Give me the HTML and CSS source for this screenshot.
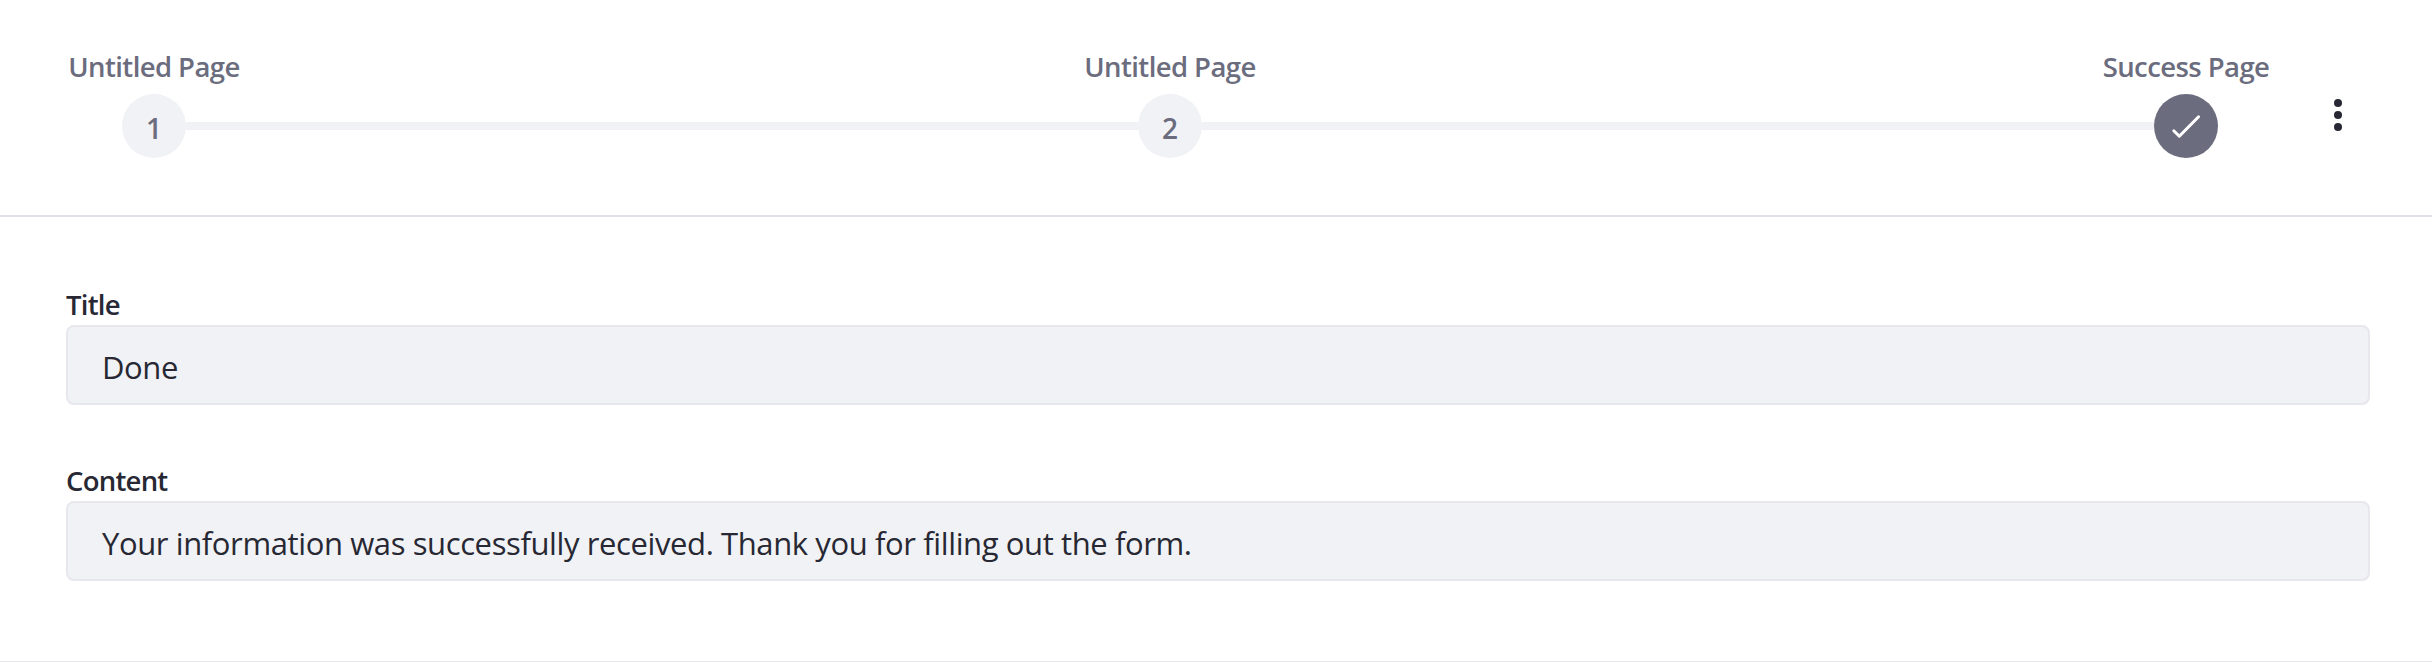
FILE: index.html
```html
<!DOCTYPE html>
<html lang="en">
<head>
<meta charset="utf-8">
<title>Success Page</title>
<link rel="stylesheet" href="styles.css">
</head>
<body>
<main class="form-builder">
  <header class="page-header">
    <div class="wizard">
      <div class="labels">
        <span class="step-label">Untitled Page</span>
        <span class="step-label">Untitled Page</span>
        <span class="step-label">Success Page</span>
      </div>
      <div class="track">
        <span class="step">1</span>
        <span class="line"></span>
        <span class="step">2</span>
        <span class="line"></span>
        <span class="step step-active">
          <svg viewBox="0 0 32 32" width="32" height="32"><path d="M3.8 20.8 L9.3 26.2 L28.6 6.8" fill="none" stroke="#fff" stroke-width="3" stroke-linecap="round" stroke-linejoin="round"/></svg>
        </span>
      </div>
    </div>
    <svg class="menu" viewBox="0 0 32 32" width="32" height="32"><g fill="#272833"><circle cx="16" cy="4" r="4"/><circle cx="16" cy="16" r="4"/><circle cx="16" cy="28" r="4"/></g></svg>
  </header>
  <section class="fields">
    <div class="field">
      <div class="field-label">Title</div>
      <div class="field-value">Done</div>
    </div>
    <div class="field">
      <div class="field-label">Content</div>
      <div class="field-value">Your information was successfully received. Thank you for filling out the form.</div>
    </div>
  </section>
</main>
</body>
</html>
```
FILE: styles.css
```css
* { box-sizing: border-box; }
body {
  margin: 0;
  background: #fff;
  color: #272833;
  font-family: "Open Sans", "Noto Sans", sans-serif;
  overflow: hidden;
}
.form-builder {
  height: 663px;
  border-bottom: 2px solid #e7e7ed;
}
.page-header {
  display: flex;
  height: 217px;
  padding: 47px 78px 0 54px;
  border-bottom: 2px solid #dfe1ea;
}
.wizard { width: 2232px; color: #6b6c7e; }
.labels { display: flex; justify-content: space-between; height: 47px; }
.step-label {
  width: 200px;
  text-align: center;
  font-size: 27.5px;
  font-weight: 600;
  line-height: 40px;
  letter-spacing: -0.58px;
  white-space: nowrap;
}
.track { display: flex; align-items: center; padding: 0 68px; }
.step {
  display: flex;
  align-items: center;
  justify-content: center;
  width: 64px;
  height: 64px;
  padding-top: 4px;
  border-radius: 50%;
  background: #f1f2f5;
  font-size: 28px;
  font-weight: 600;
  line-height: 40px;
}
.step-active { padding: 0; background: #6b6c7e; }
.line { flex: 1; height: 8px; background: #f1f2f5; }
.menu { display: block; margin: 52px 0 0 36px; }
.fields { padding: 68px 62px 0 66px; }
.field { margin-bottom: 56px; }
.field-label {
  height: 40px;
  font-size: 27.5px;
  font-weight: 600;
  line-height: 40px;
  letter-spacing: -0.75px;
}
.field-value {
  height: 80px;
  padding: 0 34px;
  border: 2px solid #e7e7ed;
  border-radius: 8px;
  background: #f1f2f5;
  font-size: 31px;
  line-height: 80px;
  letter-spacing: -0.39px;
  white-space: nowrap;
}
```
